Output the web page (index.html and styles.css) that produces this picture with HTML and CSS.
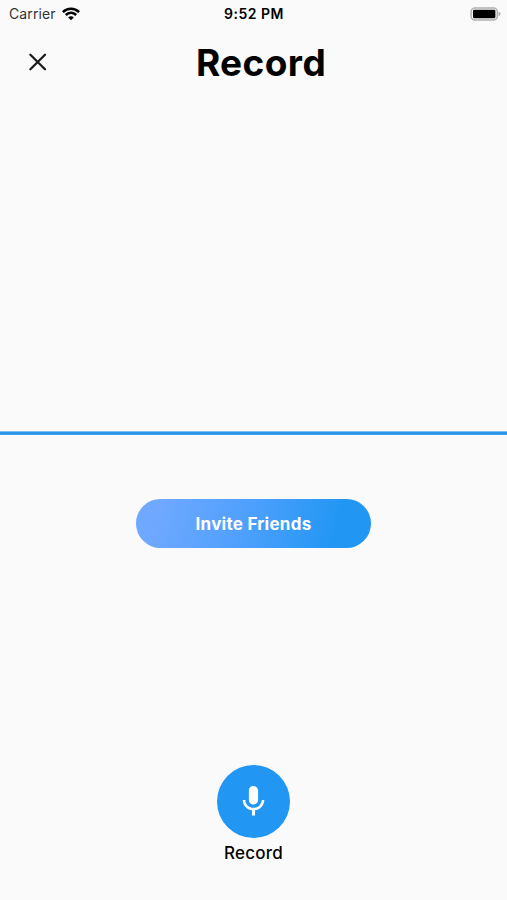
FILE: index.html
```html
<!DOCTYPE html>
<html lang="en">
<head>
  <meta charset="UTF-8">
  <meta name="viewport" content="width=device-width, initial-scale=1.0">
  <title>Record</title>
  <link rel="stylesheet" href="styles.css">
</head>
<body>
  <div class="screen">
    <div class="status-bar">
      <div class="carrier">
        <span>Carrier</span>
        <svg class="wifi" viewBox="0 0 18 14" width="18" height="14">
          <path d="M0.9 5.1 A11.4 11.4 0 0 1 17.1 5.1" />
          <path d="M3.8 8 A7.3 7.3 0 0 1 14.2 8" />
          <path class="wifi-dot" d="M6.2 10.4 A3.9 3.9 0 0 1 11.8 10.4 L9 13.3 Z" />
        </svg>
      </div>
      <div class="time">9:52 PM</div>
      <svg class="battery" viewBox="0 0 31 14" width="31" height="14">
        <rect class="battery-case" x="1.1" y="0.9" width="26.2" height="12.2" rx="3.8" />
        <rect x="3" y="2.8" width="22.4" height="8.4" rx="1.3" />
        <path class="battery-tip" d="M28.6 4.8 Q30.6 5.4 30.6 7 Q30.6 8.6 28.6 9.2 Z" />
      </svg>
    </div>

    <header class="header">
      <button class="close" aria-label="Close">
        <svg viewBox="0 0 18 18" width="18" height="18">
          <path d="M1.4 1.7 L16 16.3 M16 1.7 L1.4 16.3" />
        </svg>
      </button>
      <h1>Record</h1>
    </header>

    <svg class="waveform" viewBox="0 0 507 4" width="507" height="4">
      <rect y="0.4" width="507" height="3.5" />
    </svg>

    <button class="invite">Invite Friends</button>

    <div class="record">
      <button class="record-button" aria-label="Record">
        <svg viewBox="0 0 24 24" width="37" height="37">
          <path d="M12 14c1.66 0 2.99-1.34 2.99-3L15 5c0-1.66-1.34-3-3-3S9 3.34 9 5v6c0 1.66 1.34 3 3 3zm5.3-3c0 3-2.54 5.1-5.3 5.1S6.7 14 6.7 11H5c0 3.41 2.72 6.23 6 6.72V21h2v-3.28c3.28-.48 6-3.3 6-6.72h-1.7z" />
        </svg>
      </button>
      <span class="record-label">Record</span>
    </div>
  </div>
</body>
</html>
```

FILE: styles.css
```css
body {
  margin: 0;
  background-color: #fafafa;
  font-family: Inter, Roboto, sans-serif;
  color: #000;
}

button {
  padding: 0;
  border: none;
  background: none;
  font-family: inherit;
  cursor: pointer;
}

svg {
  display: block;
}

.screen {
  display: flex;
  flex-direction: column;
  align-items: center;
  box-sizing: border-box;
  height: 900px;
  overflow: hidden;
}

.status-bar {
  display: grid;
  grid-template-columns: 1fr auto 1fr;
  align-items: center;
  box-sizing: border-box;
  width: 100%;
  height: 27px;
  padding: 0 6px 0 9px;
}

.carrier {
  display: flex;
  align-items: center;
  gap: 6px;
  font-size: 14px;
  letter-spacing: 0.1px;
  color: #333;
}

.wifi {
  fill: none;
  stroke: #000;
  stroke-width: 2.6;
}

.wifi .wifi-dot {
  fill: #000;
  stroke: none;
}

.time {
  margin-right: 2px;
  font-size: 14px;
  font-weight: 600;
  letter-spacing: 0.5px;
}

.battery {
  justify-self: end;
}

.battery-case {
  fill: none;
  stroke: #b0b0b0;
  stroke-width: 1.5;
}

.battery-tip {
  fill: #b0b0b0;
}

.header {
  display: grid;
  grid-template-columns: 75px 1fr 60px;
  align-items: center;
  width: 100%;
  height: 70px;
}

.close {
  justify-self: center;
}

.close svg {
  fill: none;
  stroke: #1c1c1c;
  stroke-width: 2.3;
  stroke-linecap: round;
}

h1 {
  margin: 0;
  font-size: 37px;
  font-weight: 700;
  letter-spacing: 0.4px;
  text-align: center;
}

.waveform {
  flex: none;
  margin-top: 334px;
  fill: #2b95ec;
}

.invite {
  flex: none;
  width: 235px;
  height: 49px;
  margin-top: 64px;
  border-radius: 25px;
  background: linear-gradient(105deg, #6fa8ff 10%, #4b9ffc 50%, #2196f3 85%);
  color: #fff;
  font-size: 17px;
  font-weight: 700;
  letter-spacing: 0.25px;
}

.record {
  display: flex;
  flex-direction: column;
  align-items: center;
  margin-top: 217px;
}

.record-button {
  display: flex;
  align-items: center;
  justify-content: center;
  width: 73px;
  height: 73px;
  border-radius: 50%;
  background-color: #2196f3;
}

.record-button svg {
  fill: #fff;
}

.record-label {
  margin-top: 5px;
  font-size: 17px;
  font-weight: 500;
  letter-spacing: 0.2px;
}
```
